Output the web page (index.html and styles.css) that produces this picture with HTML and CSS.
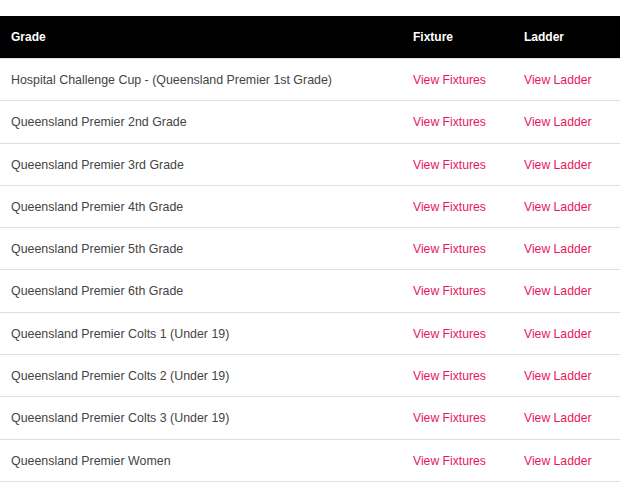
FILE: index.html
```html
<!DOCTYPE html>
<html>
<head>
<meta charset="utf-8">
<link rel="stylesheet" href="styles.css">
</head>
<body>
<table class="grades">
  <colgroup>
    <col class="col-grade">
    <col class="col-fixture">
    <col class="col-ladder">
  </colgroup>
  <thead>
    <tr><th>Grade</th><th>Fixture</th><th>Ladder</th></tr>
  </thead>
  <tbody>
    <tr><td>Hospital Challenge Cup - (Queensland Premier 1st Grade)</td><td><a href="#">View Fixtures</a></td><td><a href="#">View Ladder</a></td></tr>
    <tr><td>Queensland Premier 2nd Grade</td><td><a href="#">View Fixtures</a></td><td><a href="#">View Ladder</a></td></tr>
    <tr><td>Queensland Premier 3rd Grade</td><td><a href="#">View Fixtures</a></td><td><a href="#">View Ladder</a></td></tr>
    <tr><td>Queensland Premier 4th Grade</td><td><a href="#">View Fixtures</a></td><td><a href="#">View Ladder</a></td></tr>
    <tr><td>Queensland Premier 5th Grade</td><td><a href="#">View Fixtures</a></td><td><a href="#">View Ladder</a></td></tr>
    <tr><td>Queensland Premier 6th Grade</td><td><a href="#">View Fixtures</a></td><td><a href="#">View Ladder</a></td></tr>
    <tr><td>Queensland Premier Colts 1 (Under 19)</td><td><a href="#">View Fixtures</a></td><td><a href="#">View Ladder</a></td></tr>
    <tr><td>Queensland Premier Colts 2 (Under 19)</td><td><a href="#">View Fixtures</a></td><td><a href="#">View Ladder</a></td></tr>
    <tr><td>Queensland Premier Colts 3 (Under 19)</td><td><a href="#">View Fixtures</a></td><td><a href="#">View Ladder</a></td></tr>
    <tr><td>Queensland Premier Women</td><td><a href="#">View Fixtures</a></td><td><a href="#">View Ladder</a></td></tr>
  </tbody>
</table>
</body>
</html>
```
FILE: styles.css
```css
html, body {
  margin: 0;
  padding: 0;
  background: #fff;
}
body {
  padding-top: 16px;
  font-family: "Liberation Sans", Arial, sans-serif;
  font-size: 12.4px;
  color: #444;
}
.grades {
  width: 620px;
  border-collapse: collapse;
  table-layout: fixed;
}
.col-grade { width: 402px; }
.col-fixture { width: 111px; }
.col-ladder { width: 107px; }
.grades th {
  background: #000;
  color: #fff;
  font-size: 12px;
  font-weight: bold;
  text-align: left;
  padding: 1px 10px 1px 11px;
  height: 40px;
  line-height: 17px;
  border-bottom: 1px solid #ddd;
}
.grades td {
  padding: 13px 10px 11px 11px;
  line-height: 17.3px;
  border-bottom: 1px solid #ddd;
  white-space: nowrap;
}
.grades a {
  font-size: 12.2px;
  color: #e8175d;
  text-decoration: none;
}
```
